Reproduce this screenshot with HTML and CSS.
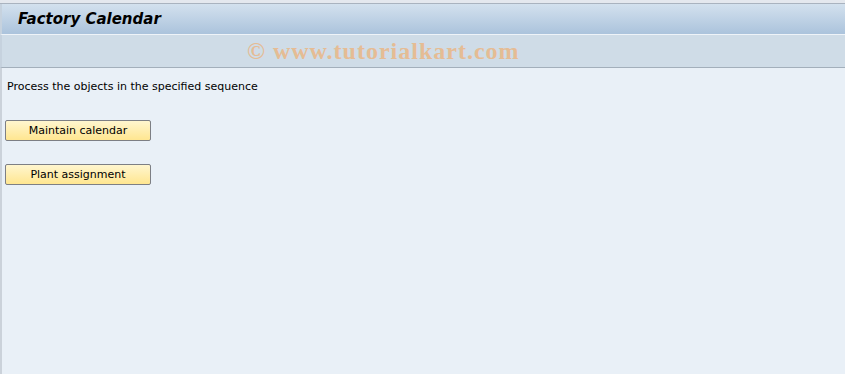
FILE: index.html
```html
<!DOCTYPE html>
<html lang="en">
<head>
  <meta charset="UTF-8">
  <title>Factory Calendar</title>
  <link rel="stylesheet" href="styles.css">
</head>
<body>
  <!-- Window header -->
  <div class="top-strip"></div>
  <div class="title-bar">
    <h1>Factory Calendar</h1>
  </div>
  <div class="toolbar">
    <span class="watermark">&copy; www.tutorialkart.com</span>
  </div>

  <!-- Screen content -->
  <div class="content">
    <p class="hint">Process the objects in the specified sequence</p>
    <button class="sap-btn">Maintain calendar</button>
    <button class="sap-btn">Plant assignment</button>
  </div>
</body>
</html>
```

FILE: styles.css
```css
/* Reset */
* {
  margin: 0;
  padding: 0;
  box-sizing: border-box;
}

html, body {
  height: 100%;
  overflow: hidden;
}

body {
  display: flex;
  flex-direction: column;
  background-color: #e9f0f7;
  font-family: Tahoma, "DejaVu Sans", "Liberation Sans", sans-serif;
}

/* Header */
.top-strip {
  height: 4px;
  background-color: #e4e8ee;
  border-bottom: 1px solid #a9b3bf;
}

.title-bar {
  height: 31px;
  padding-left: 16px;
  display: flex;
  align-items: center;
  background: linear-gradient(to bottom, #d3e1ee, #abc3dc);
  border-left: 2px solid #c6d2de;
  border-bottom: 1px solid #eef3f8;
}

.title-bar h1 {
  font-family: "DejaVu Sans", Verdana, sans-serif;
  font-size: 15px;
  font-weight: bold;
  font-style: italic;
  color: #000;
}

.toolbar {
  height: 33px;
  display: flex;
  align-items: center;
  padding-left: 245px;
  background-color: #cfdce7;
  border-left: 2px solid #c6d2de;
  border-bottom: 1px solid #a3afbb;
}

.watermark {
  font-family: "Liberation Serif", "Times New Roman", serif;
  font-size: 24px;
  font-weight: bold;
  letter-spacing: 1px;
  color: #e8b98c;
  opacity: 0.9;
}

/* Content */
.content {
  flex: 1;
  display: flex;
  flex-direction: column;
  align-items: flex-start;
  padding: 12px 0 0 3px;
  border-left: 2px solid #cbd2da;
}

.hint {
  font-family: "DejaVu Sans", sans-serif;
  font-size: 11px;
  color: #000;
  margin-left: 2px;
  margin-bottom: 27px;
}

.sap-btn {
  width: 146px;
  height: 21px;
  margin-bottom: 23px;
  font-family: "DejaVu Sans", sans-serif;
  font-size: 11px;
  color: #000;
  background: linear-gradient(to bottom, #fff6cf, #ffe690);
  border: 1px solid #7d7f84;
  border-radius: 2px;
  cursor: pointer;
}
```
